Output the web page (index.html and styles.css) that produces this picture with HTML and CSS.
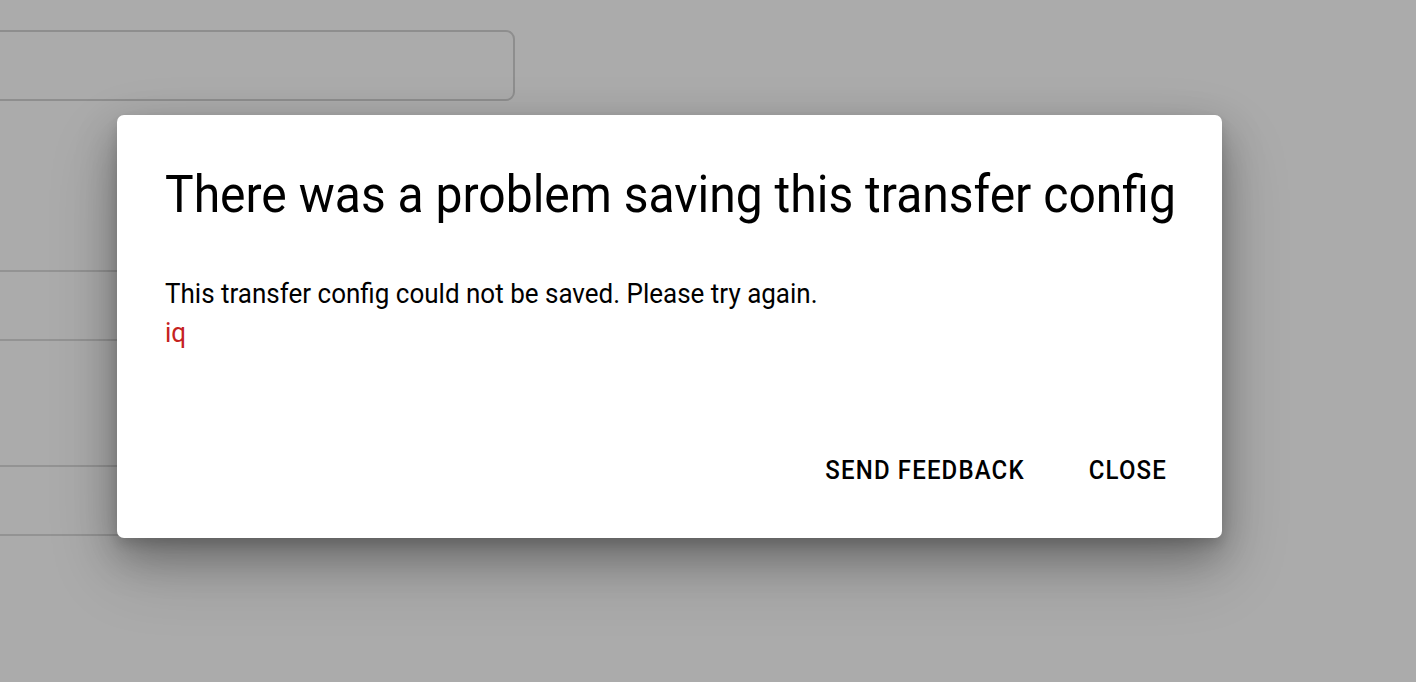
FILE: index.html
```html
<!DOCTYPE html>
<html>
<head>
<meta charset="utf-8">
<link rel="stylesheet" href="styles.css">
</head>
<body>
<div class="page">
  <div class="field"></div>
  <div class="rows">
    <div class="row r1"></div>
    <div class="row r2"></div>
    <div class="row r3"></div>
    <div class="row r4"></div>
  </div>
</div>
<div class="dialog" role="dialog">
  <h1 class="title"><span class="tx">There was a problem saving this transfer config</span></h1>
  <div class="content">
    <p class="msg"><span class="tx">This transfer config could not be saved. Please try again.</span></p>
    <p class="err"><span class="tx">iq</span></p>
  </div>
  <div class="actions">
    <button class="btn"><span class="tx">SEND FEEDBACK</span></button>
    <button class="btn"><span class="tx">CLOSE</span></button>
  </div>
</div>
</body>
</html>
```
FILE: styles.css
```css
html, body {
  margin: 0;
  height: 100%;
}
body {
  background: #ababab;
  font-family: Roboto, "Liberation Sans", sans-serif;
  overflow: hidden;
}
.page {
  padding-top: 30px;
  margin-left: -20px;
  width: 700px;
}
.field {
  width: 531px;
  height: 67px;
  border: 2px solid #8e8e8e;
  border-radius: 9px;
}
.rows {
  display: flex;
  flex-direction: column;
}
.row {
  border-top: 2px solid #939393;
}
.r1 { margin-top: 169px; }
.r2 { margin-top: 67px; }
.r3 { margin-top: 124px; }
.r4 { margin-top: 67px; }

.dialog {
  position: absolute;
  left: 117px;
  top: 115px;
  width: 1105px;
  height: 423px;
  box-sizing: border-box;
  background: #fff;
  border-radius: 7px;
  box-shadow: 0 18px 40px rgba(0,0,0,0.28), 0 30px 70px rgba(0,0,0,0.18), 0 6px 12px rgba(0,0,0,0.12);
  padding: 53px 0 0 48px;
  display: flex;
  flex-direction: column;
}
.tx {
  display: inline-block;
  transform: scaleY(1.09);
  transform-origin: 0 80%;
}
.title {
  margin: 0;
  font-size: 48px;
  font-weight: 400;
  line-height: 56px;
  color: #000;
}
.content {
  margin-top: 51px;
  font-size: 26px;
  line-height: 39px;
}
.msg, .err {
  margin: 0;
}
.msg { color: #000; }
.err { color: #c5221f; }
.actions {
  margin-top: auto;
  margin-bottom: 42px;
  display: flex;
  justify-content: flex-end;
  gap: 40px;
  padding-right: 43px;
}
.btn {
  font-family: Roboto, "Liberation Sans", sans-serif;
  font-size: 24px;
  font-weight: 500;
  color: #000;
  background: none;
  border: 0;
  padding: 10px 12px;
  line-height: 30px;
  letter-spacing: 1.15px;
  cursor: pointer;
}
```
